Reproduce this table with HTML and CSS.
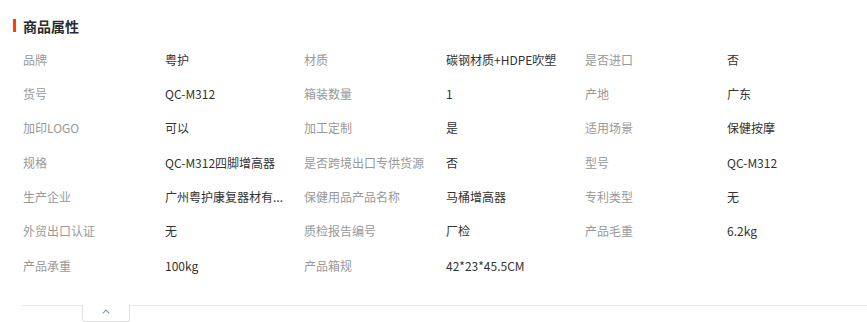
FILE: index.html
```html
<!DOCTYPE html>
<html lang="zh-CN">
<head>
<meta charset="utf-8">
<link rel="stylesheet" href="styles.css">
</head>
<body>
<div class="attrs">
  <h2 class="title">商品属性</h2>
  <div class="grid">
    <div class="item"><span class="k">品牌</span><span class="v">粤护</span></div>
    <div class="item"><span class="k">材质</span><span class="v">碳钢材质+HDPE吹塑</span></div>
    <div class="item"><span class="k">是否进口</span><span class="v">否</span></div>
    <div class="item"><span class="k">货号</span><span class="v">QC-M312</span></div>
    <div class="item"><span class="k">箱装数量</span><span class="v">1</span></div>
    <div class="item"><span class="k">产地</span><span class="v">广东</span></div>
    <div class="item"><span class="k">加印LOGO</span><span class="v">可以</span></div>
    <div class="item"><span class="k">加工定制</span><span class="v">是</span></div>
    <div class="item"><span class="k">适用场景</span><span class="v">保健按摩</span></div>
    <div class="item"><span class="k">规格</span><span class="v">QC-M312四脚增高器</span></div>
    <div class="item"><span class="k">是否跨境出口专供货源</span><span class="v">否</span></div>
    <div class="item"><span class="k">型号</span><span class="v">QC-M312</span></div>
    <div class="item"><span class="k">生产企业</span><span class="v" title="广州粤护康复器材有限公司">广州粤护康复器材有...</span></div>
    <div class="item"><span class="k">保健用品产品名称</span><span class="v">马桶增高器</span></div>
    <div class="item"><span class="k">专利类型</span><span class="v">无</span></div>
    <div class="item"><span class="k">外贸出口认证</span><span class="v">无</span></div>
    <div class="item"><span class="k">质检报告编号</span><span class="v">厂检</span></div>
    <div class="item"><span class="k">产品毛重</span><span class="v">6.2kg</span></div>
    <div class="item"><span class="k">产品承重</span><span class="v">100kg</span></div>
    <div class="item"><span class="k">产品箱规</span><span class="v">42*23*45.5CM</span></div>
  </div>
  <div class="foot">
    <button class="toggle" type="button" aria-label="收起">
      <svg width="8" height="5" viewBox="0 0 8 5"><path d="M0.8 4.3 L4 1.1 L7.2 4.3" fill="none" stroke="#7f95b3" stroke-width="1.1"/></svg>
    </button>
  </div>
</div>
</body>
</html>
```
FILE: styles.css
```css
* { box-sizing: border-box; }
html, body { margin: 0; padding: 0; background: #fff; }
body {
  font-family: "Noto Sans CJK SC", "Noto Sans", sans-serif;
  font-size: 12px;
  color: #333;
  width: 867px;
  height: 322px;
  overflow: hidden;
}
.attrs { padding-top: 19px; }
.title {
  margin: 0 0 0 13px;
  padding-left: 7px;
  border-left: 3px solid #ff4000;
  font-size: 14px;
  font-weight: bold;
  line-height: 14px;
  height: 13px;
  color: #2b2b2b;
  display: flex;
  align-items: center;
}
.grid {
  margin: 10px 0 0 23px;
  display: grid;
  grid-template-columns: 281px 281px 281px;
  grid-auto-rows: 34.33px;
}
.item { display: flex; align-items: center; white-space: nowrap; }
.k { width: 142px; color: #999; flex: none; }
.v { color: #333; }
.foot {
  margin: 23px 0 0 22px;
  border-top: 1px solid #e6e6e6;
  height: 17px;
  position: relative;
}
.toggle {
  position: absolute;
  left: 60px;
  top: -1px;
  width: 48px;
  height: 17px;
  padding: 0;
  background: #fff;
  border: 1px solid #e0e0e0;
  border-top: none;
  border-radius: 0 0 3px 3px;
  display: flex;
  justify-content: center;
  align-items: flex-start;
  padding-top: 4px;
}
.toggle svg { display: block; }
```
